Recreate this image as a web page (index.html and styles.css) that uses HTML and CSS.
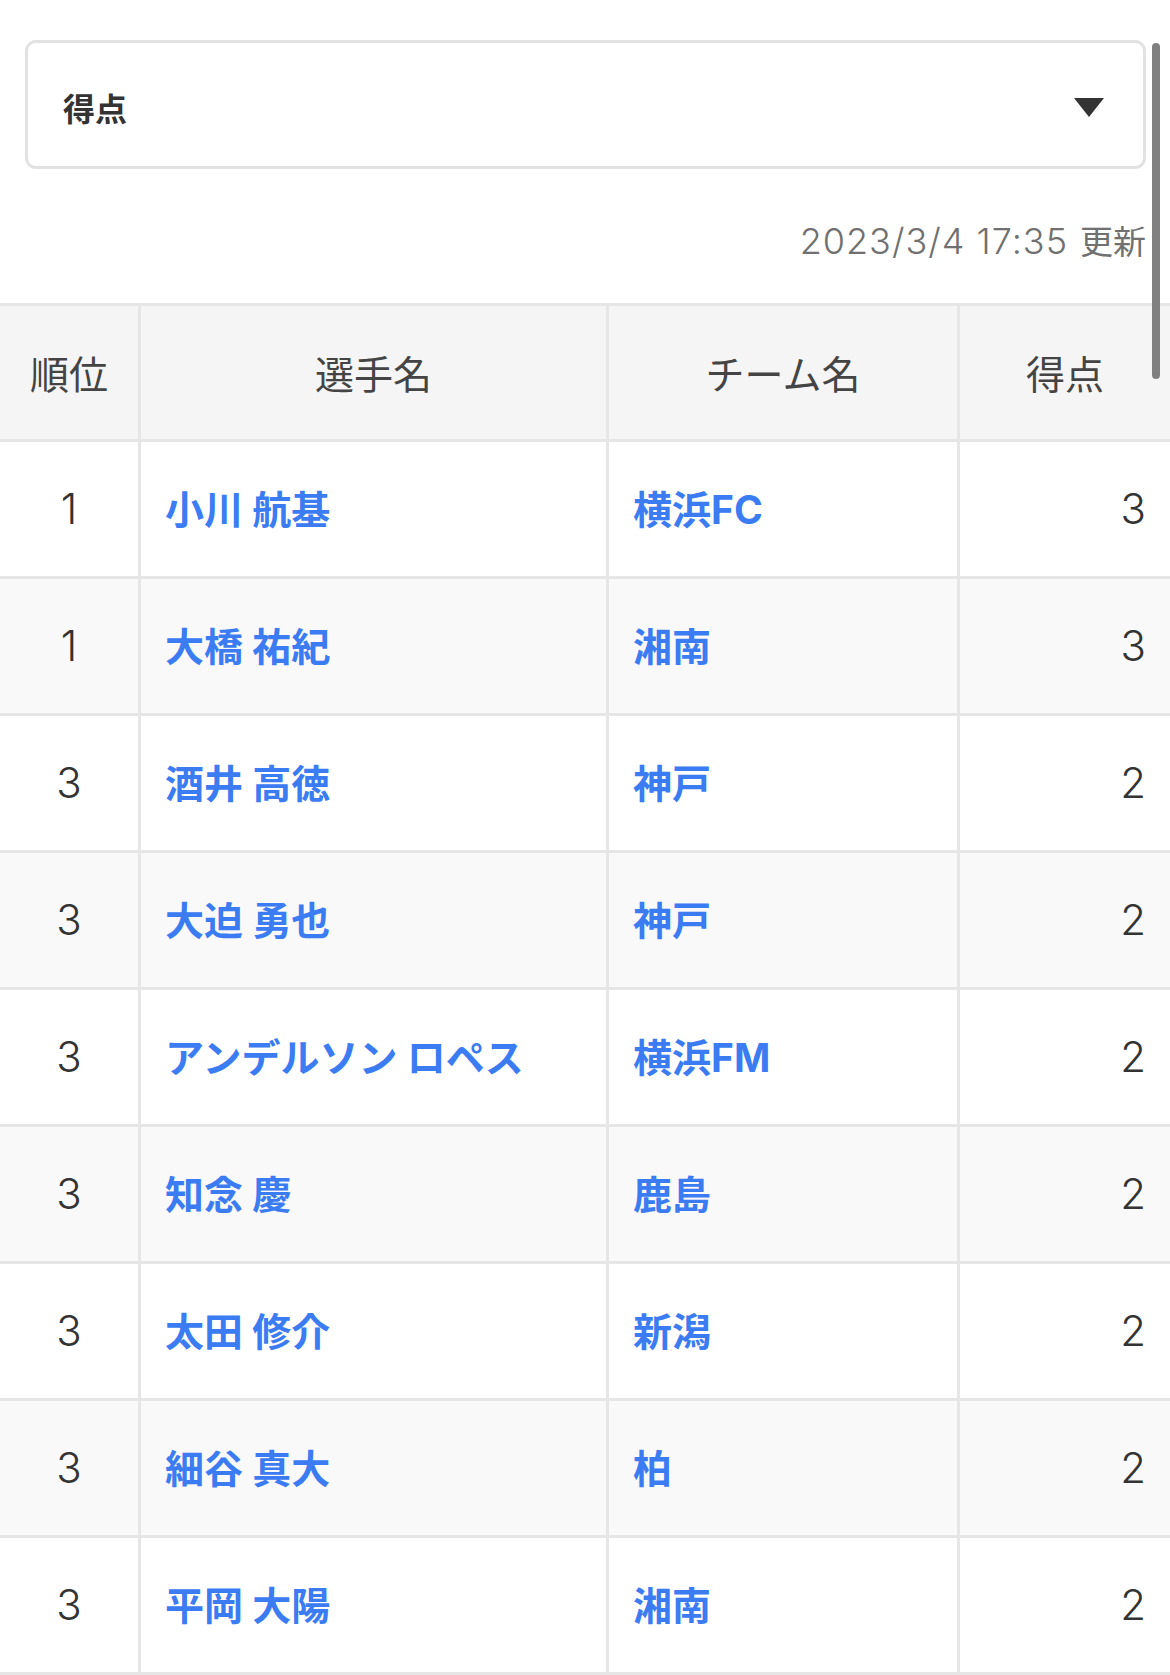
FILE: index.html
```html
<!DOCTYPE html>
<html lang="ja">
<head>
    <meta charset="UTF-8">
    <meta name="viewport" content="width=device-width, initial-scale=1.0">
    <title>得点ランキング</title>
    <link rel="stylesheet" href="styles.css">
</head>
<body>
    <div class="page">
        <div class="top">
            <div class="select">
                <span class="select-label">得点</span>
                <span class="select-arrow"></span>
            </div>
            <p class="updated">2023/3/4 17:35<span class="updated-suffix">更新</span></p>
        </div>

        <table class="ranking">
            <thead>
                <tr>
                    <th class="col-rank">順位</th>
                    <th class="col-name">選手名</th>
                    <th class="col-team">チーム名</th>
                    <th class="col-score">得点</th>
                </tr>
            </thead>
            <tbody>
                <tr><td class="rank">1</td><td class="name"><a>小川 航基</a></td><td class="team"><a>横浜FC</a></td><td class="score">3</td></tr>
                <tr><td class="rank">1</td><td class="name"><a>大橋 祐紀</a></td><td class="team"><a>湘南</a></td><td class="score">3</td></tr>
                <tr><td class="rank">3</td><td class="name"><a>酒井 高徳</a></td><td class="team"><a>神戸</a></td><td class="score">2</td></tr>
                <tr><td class="rank">3</td><td class="name"><a>大迫 勇也</a></td><td class="team"><a>神戸</a></td><td class="score">2</td></tr>
                <tr><td class="rank">3</td><td class="name"><a>アンデルソン ロペス</a></td><td class="team"><a>横浜FM</a></td><td class="score">2</td></tr>
                <tr><td class="rank">3</td><td class="name"><a>知念 慶</a></td><td class="team"><a>鹿島</a></td><td class="score">2</td></tr>
                <tr><td class="rank">3</td><td class="name"><a>太田 修介</a></td><td class="team"><a>新潟</a></td><td class="score">2</td></tr>
                <tr><td class="rank">3</td><td class="name"><a>細谷 真大</a></td><td class="team"><a>柏</a></td><td class="score">2</td></tr>
                <tr><td class="rank">3</td><td class="name"><a>平岡 大陽</a></td><td class="team"><a>湘南</a></td><td class="score">2</td></tr>
            </tbody>
        </table>

        <!-- スクロールインジケーター -->
        <div class="scroll-thumb"></div>
    </div>
</body>
</html>
```

FILE: styles.css
```css
* {
    margin: 0;
    padding: 0;
    box-sizing: border-box;
}

html, body {
    height: 100%;
    overflow: hidden;
}

body {
    font-family: Inter, "Noto Sans CJK JP", sans-serif;
    background: #fff;
    color: #333;
}

.page {
    position: relative;
    width: 1170px;
}

.top {
    padding: 40px 24px 0 25px;
}

.select {
    height: 129px;
    border: 3px solid #e2e2e2;
    border-radius: 11px;
    display: flex;
    align-items: center;
    justify-content: space-between;
    padding: 4px 39px 0 35px;
}

.select-label {
    font-family: "Noto Sans CJK JP", sans-serif;
    font-size: 32px;
    font-weight: 700;
    color: #333;
    line-height: 1;
}

.select-arrow {
    width: 0;
    height: 0;
    margin-top: 2px;
    border-left: 15.5px solid transparent;
    border-right: 15.5px solid transparent;
    border-top: 19px solid #333;
}

.updated {
    height: 40px;
    margin: 51px 0 43px;
    text-align: right;
    font-size: 36px;
    font-weight: 300;
    letter-spacing: 1px;
    line-height: 40px;
    color: #707070;
    white-space: nowrap;
}

.updated-suffix {
    font-family: "Noto Sans CJK JP", sans-serif;
    font-size: 33px;
    font-weight: 400;
    letter-spacing: 0;
    line-height: 40px;
    margin-left: 12px;
}

.ranking {
    width: 1170px;
    border-collapse: separate;
    border-spacing: 0;
    table-layout: fixed;
    border-top: 3px solid #e6e6e6;
    font-size: 39px;
}

.col-rank { width: 141px; }
.col-name { width: 468px; }
.col-team { width: 351px; }
.col-score { width: 210px; }

th, td {
    border-right: 3px solid #e6e6e6;
    border-bottom: 3px solid #e6e6e6;
    line-height: 1;
    vertical-align: middle;
}

th:last-child, td:last-child {
    border-right: none;
}

th {
    height: 136px;
    background: #f5f5f5;
    font-family: "Noto Sans CJK JP", sans-serif;
    font-weight: 400;
    color: #444;
    text-align: center;
}

td {
    height: 137px;
    padding: 0 24px;
}

tbody tr:nth-child(even) td {
    background: #f9f9f9;
}

.rank, .score {
    font-size: 42px;
    font-weight: 300;
    color: #333;
}

.rank {
    text-align: center;
    padding: 0;
}

.score {
    text-align: right;
}

.name a, .team a {
    color: #3b7cf2;
    font-weight: 700;
    text-decoration: none;
}

.scroll-thumb {
    position: absolute;
    left: 1152px;
    top: 43px;
    width: 8px;
    height: 336px;
    border-radius: 4px;
    background: #808080;
}
```
